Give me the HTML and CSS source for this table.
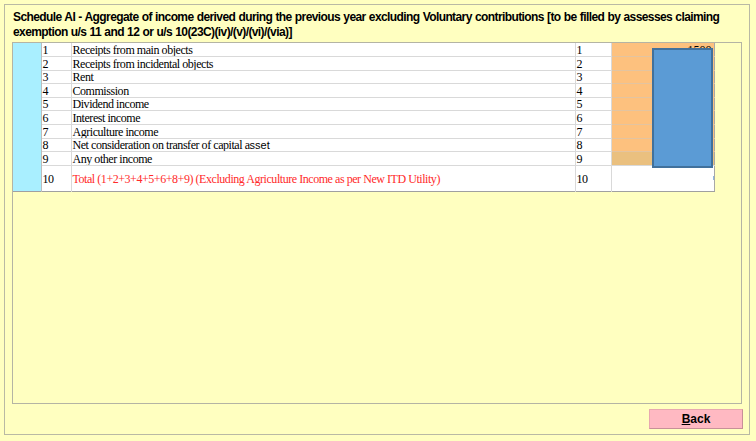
FILE: index.html
```html
<!DOCTYPE html>
<html>
<head>
<meta charset="utf-8">
<link rel="stylesheet" href="styles.css">
</head>
<body>
<div class="panel">
  <div class="title">Schedule AI - Aggregate of income derived during the previous year excluding Voluntary contributions [to be filled by assesses claiming exemption u/s 11 and 12 or u/s 10(23C)(iv)/(v)/(vi)/(via)]</div>
  <div class="box">
    <table class="grid">
      <colgroup>
        <col class="c-side"><col class="c-no"><col class="c-desc"><col class="c-no2"><col class="c-val">
      </colgroup>
      <tr class="r14"><td class="side" rowspan="10"></td><td class="no">1</td><td class="desc">Receipts from main objects</td><td class="no2">1</td><td class="val first">1500</td></tr>
      <tr class="r14"><td class="no">2</td><td class="desc">Receipts from incidental objects</td><td class="no2">2</td><td class="val"></td></tr>
      <tr class="r13"><td class="no">3</td><td class="desc">Rent</td><td class="no2">3</td><td class="val"></td></tr>
      <tr class="r14"><td class="no">4</td><td class="desc">Commission</td><td class="no2">4</td><td class="val"></td></tr>
      <tr class="r13"><td class="no">5</td><td class="desc">Dividend income</td><td class="no2">5</td><td class="val"></td></tr>
      <tr class="r14"><td class="no">6</td><td class="desc">Interest income</td><td class="no2">6</td><td class="val"></td></tr>
      <tr class="r14"><td class="no">7</td><td class="desc">Agriculture income</td><td class="no2">7</td><td class="val"></td></tr>
      <tr class="r13"><td class="no">8</td><td class="desc">Net consideration on transfer of capital a<span class="sans">sset</span></td><td class="no2">8</td><td class="val"></td></tr>
      <tr class="r14"><td class="no">9</td><td class="desc">Any other income</td><td class="no2">9</td><td class="val tan"></td></tr>
      <tr class="r26"><td class="no">10</td><td class="desc red">Total (1+2+3+4+5+6+8+9) (Excluding Agriculture Income as per New ITD Utility)</td><td class="no2">10</td><td class="val white"><span class="tick"></span></td></tr>
    </table>
    <div class="shape"></div>
  </div>
  <div class="actions">
    <button class="back"><u>B</u>ack</button>
  </div>
</div>
</body>
</html>
```
FILE: styles.css
```css
html, body {
  margin: 0;
  padding: 0;
  background: #ffffc0;
}
body {
  width: 756px;
  height: 441px;
  overflow: hidden;
  font-family: "Liberation Sans", Arial, sans-serif;
}
.panel {
  margin: 4px 0 0 4px;
  width: 746px;
  height: 431px;
  box-sizing: border-box;
  border: 1px solid #b9b9a4;
  display: flex;
  flex-direction: column;
}
.title {
  height: 37px;
  box-sizing: border-box;
  padding: 5px 4px 0 8px;
  font-size: 12px;
  letter-spacing: -0.6px;
  word-spacing: 0.5px;
  font-weight: bold;
  line-height: 15px;
  color: #000;
}
.box {
  position: relative;
  margin-left: 7px;
  width: 730px;
  height: 362px;
  box-sizing: border-box;
  border: 1px solid #b4b4a4;
}
.grid {
  border-collapse: collapse;
  table-layout: fixed;
  width: 701px;
  font-family: "Liberation Serif", "Times New Roman", serif;
  font-size: 12px;
  letter-spacing: -0.45px;
  color: #000;
  border-right: 1px solid #a8a8a8;
  border-bottom: 1px solid #a0a0a0;
}
.c-side { width: 28px; }
.c-no { width: 30px; }
.c-desc { width: 504px; }
.c-no2 { width: 36px; }
.c-val { width: 103px; }
.grid td {
  padding: 0 0 0 1px;
  border-top: 1px solid #d9d9d9;
  border-left: 1px solid #d9d9d9;
  line-height: 12px;
  white-space: nowrap;
  overflow: hidden;
  background: #fff;
  vertical-align: middle;
}
.grid tr:first-child td { border-top: none; }
.r14 td { height: 13px; }
.r13 td { height: 12px; }
.r26 td { height: 25px; }
.grid td.side {
  background: #a9efff;
  border-left: none;
  border-right: 1px solid #bdbdbd;
}
.grid td.val {
  background: #fdc17e;
  border-top-color: #e3c4a0;
  text-align: right;
  padding-right: 2px;
}
.grid td.first {
  vertical-align: top;
  padding-top: 2px;
  height: 11px;
  line-height: 11px;
  letter-spacing: 0;
}
.grid td.tan { background: #eac07f; }
.grid td.white { background: #fff; border-top-color: #d9d9d9; position: relative; }
.red { color: #ff2a2a; }
.sans { font-family: "Liberation Sans", Arial, sans-serif; font-size: 11px; letter-spacing: 0; }
.tick {
  position: absolute;
  right: 0;
  top: 10px;
  width: 1px;
  height: 4px;
  background: #8fb8e0;
}
.shape {
  position: absolute;
  left: 639px;
  top: 5px;
  width: 61px;
  height: 120px;
  box-sizing: border-box;
  background: #5b9bd5;
  border: 2px solid #41719c;
}
.actions {
  display: flex;
  justify-content: flex-end;
  padding: 5px 6px 0 0;
}
.back {
  width: 94px;
  height: 20px;
  margin: 0;
  padding: 0;
  background: #ffb9c2;
  border: 1px solid #e8a8b0;
  border-bottom-color: #c89098;
  border-right-color: #c89098;
  font-family: "Liberation Sans", Arial, sans-serif;
  font-size: 12px;
  font-weight: bold;
  color: #000;
}
```
